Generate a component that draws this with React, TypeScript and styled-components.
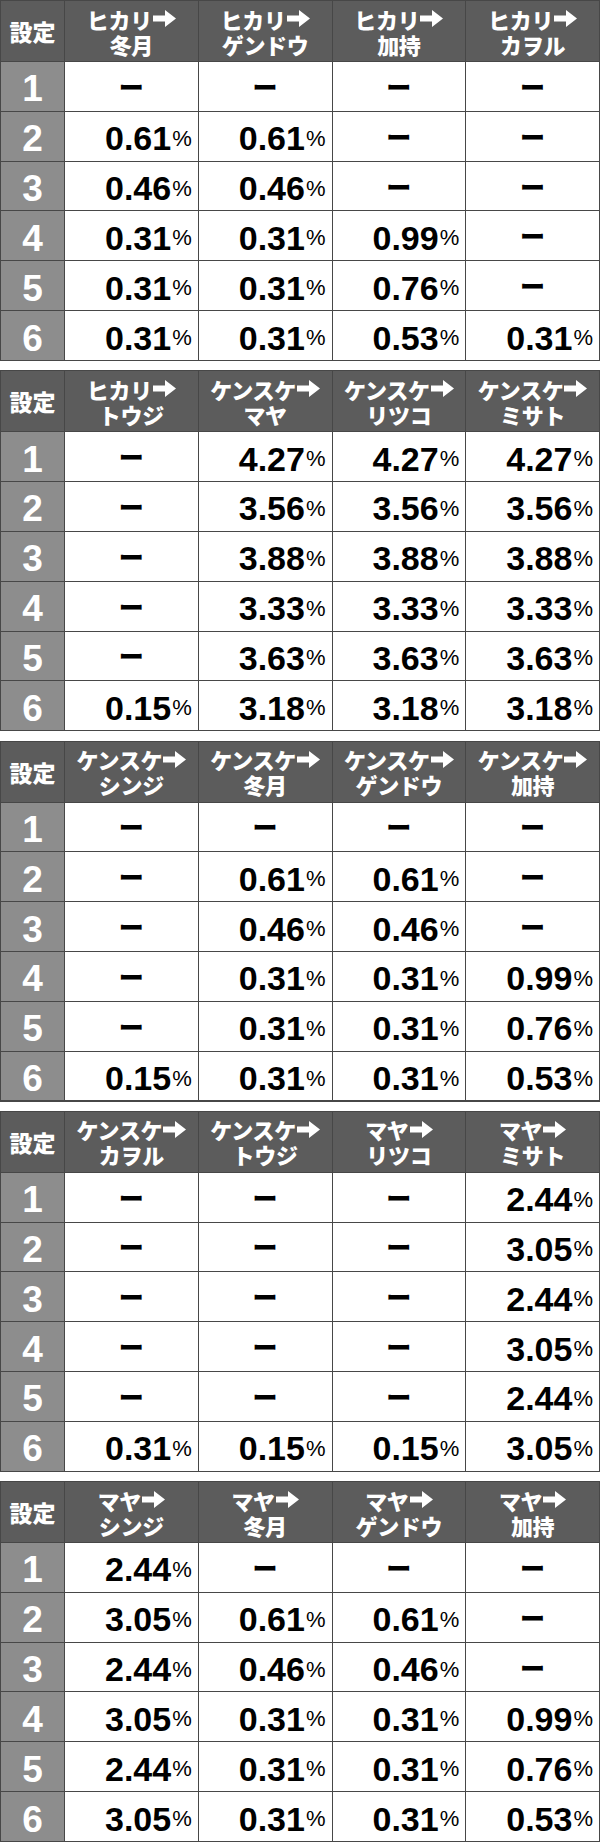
import React from "react";
import styled, { createGlobalStyle } from "styled-components";

const Global = createGlobalStyle`
  html, body { margin: 0; padding: 0; background: #ffffff; }
  body { font-family: "Liberation Sans", Arial, sans-serif; }
`;

const Page = styled.div`
  width: 600px;
  display: flex;
  flex-direction: column;
  gap: 9.25px;
`;

const Table = styled.div`
  display: grid;
  grid-template-columns: 63px repeat(4, 1fr);
  grid-template-rows: 60px repeat(6, 1fr);
  height: 361px;
  gap: 1px;
  padding: 1px;
  box-sizing: border-box;
  background: #474747;
`;

const HeadCell = styled.div`
  background: #5c5c5c;
  color: #ffffff;
  display: flex;
  flex-direction: column;
  align-items: center;
  justify-content: center;
  font-family: "Noto Sans CJK JP", sans-serif;
  font-weight: 900;
  font-size: 22px;
  line-height: 26px;
  letter-spacing: -0.3px;
`;

const CornerCell = styled(HeadCell)`
  font-size: 23px;
  letter-spacing: 0;
`;

const Line = styled.span`
  display: flex;
  align-items: center;
  white-space: nowrap;
  height: 25px;
`;

const SettingCell = styled.div`
  background: #8d8d8d;
  color: #ffffff;
  display: flex;
  align-items: center;
  justify-content: center;
  font-family: "Liberation Sans", Arial, sans-serif;
  font-weight: 700;
  font-size: 37px;
  padding-top: 6px;
`;

const DataCell = styled.div<{ $empty: boolean }>`
  background: #ffffff;
  color: #000000;
  display: flex;
  align-items: center;
  justify-content: ${(p) => (p.$empty ? "center" : "flex-end")};
  padding-top: 5px;
  padding-right: ${(p) => (p.$empty ? "0" : "6px")};
  font-family: "Liberation Sans", Arial, sans-serif;
  white-space: nowrap;
`;

const Value = styled.span`
  font-weight: 700;
  font-size: 34px;
  letter-spacing: 0;
`;

const Percent = styled.span`
  font-weight: 400;
  font-size: 22px;
  margin-left: 1px;
`;

const Dash = styled.span`
  font-family: "Noto Sans CJK JP", sans-serif;
  font-weight: 900;
  font-size: 25px;
  margin-top: -6px;
`;

const Arrow = () => (
  <svg width="23" height="17" viewBox="0 0 23 17" style={{ marginLeft: 1 }}>
    <path d="M0 5.5 H12 V0 L23 8.5 L12 17 V11.5 H0 Z" fill="#ffffff" />
  </svg>
);

type TableData = {
  heads: [string, string][];
  rows: (string | null)[][];
};

const D = null;

const tables: TableData[] = [
  {
    heads: [
      ["ヒカリ", "冬月"],
      ["ヒカリ", "ゲンドウ"],
      ["ヒカリ", "加持"],
      ["ヒカリ", "カヲル"],
    ],
    rows: [
      [D, D, D, D],
      ["0.61", "0.61", D, D],
      ["0.46", "0.46", D, D],
      ["0.31", "0.31", "0.99", D],
      ["0.31", "0.31", "0.76", D],
      ["0.31", "0.31", "0.53", "0.31"],
    ],
  },
  {
    heads: [
      ["ヒカリ", "トウジ"],
      ["ケンスケ", "マヤ"],
      ["ケンスケ", "リツコ"],
      ["ケンスケ", "ミサト"],
    ],
    rows: [
      [D, "4.27", "4.27", "4.27"],
      [D, "3.56", "3.56", "3.56"],
      [D, "3.88", "3.88", "3.88"],
      [D, "3.33", "3.33", "3.33"],
      [D, "3.63", "3.63", "3.63"],
      ["0.15", "3.18", "3.18", "3.18"],
    ],
  },
  {
    heads: [
      ["ケンスケ", "シンジ"],
      ["ケンスケ", "冬月"],
      ["ケンスケ", "ゲンドウ"],
      ["ケンスケ", "加持"],
    ],
    rows: [
      [D, D, D, D],
      [D, "0.61", "0.61", D],
      [D, "0.46", "0.46", D],
      [D, "0.31", "0.31", "0.99"],
      [D, "0.31", "0.31", "0.76"],
      ["0.15", "0.31", "0.31", "0.53"],
    ],
  },
  {
    heads: [
      ["ケンスケ", "カヲル"],
      ["ケンスケ", "トウジ"],
      ["マヤ", "リツコ"],
      ["マヤ", "ミサト"],
    ],
    rows: [
      [D, D, D, "2.44"],
      [D, D, D, "3.05"],
      [D, D, D, "2.44"],
      [D, D, D, "3.05"],
      [D, D, D, "2.44"],
      ["0.31", "0.15", "0.15", "3.05"],
    ],
  },
  {
    heads: [
      ["マヤ", "シンジ"],
      ["マヤ", "冬月"],
      ["マヤ", "ゲンドウ"],
      ["マヤ", "加持"],
    ],
    rows: [
      ["2.44", D, D, D],
      ["3.05", "0.61", "0.61", D],
      ["2.44", "0.46", "0.46", D],
      ["3.05", "0.31", "0.31", "0.99"],
      ["2.44", "0.31", "0.31", "0.76"],
      ["3.05", "0.31", "0.31", "0.53"],
    ],
  },
];

const RateTable = ({ data }: { data: TableData }) => (
  <Table>
    <CornerCell>設定</CornerCell>
    {data.heads.map(([from, to], i) => (
      <HeadCell key={i}>
        <Line>
          {from}
          <Arrow />
        </Line>
        <Line>{to}</Line>
      </HeadCell>
    ))}
    {data.rows.map((row, r) => (
      <React.Fragment key={r}>
        <SettingCell>{r + 1}</SettingCell>
        {row.map((v, c) => (
          <DataCell key={c} $empty={v === null}>
            {v === null ? (
              <Dash>ー</Dash>
            ) : (
              <>
                <Value>{v}</Value>
                <Percent>%</Percent>
              </>
            )}
          </DataCell>
        ))}
      </React.Fragment>
    ))}
  </Table>
);

export default function App() {
  return (
    <>
      <Global />
      <Page>
        {tables.map((t, i) => (
          <RateTable key={i} data={t} />
        ))}
      </Page>
    </>
  );
}
